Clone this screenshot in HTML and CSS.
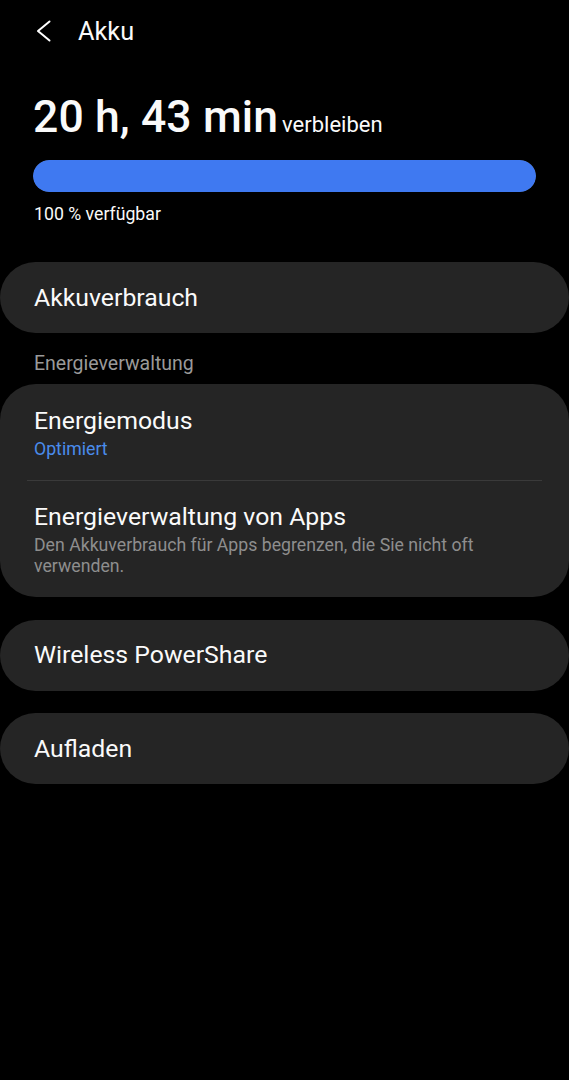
FILE: index.html
```html
<!DOCTYPE html>
<html lang="de">
<head>
  <meta charset="UTF-8">
  <meta name="viewport" content="width=device-width, initial-scale=1.0">
  <title>Akku</title>
  <link rel="stylesheet" href="styles.css">
</head>
<body>
  <header class="topbar">
    <svg class="back" width="24" height="24" viewBox="0 0 24 24">
      <polyline points="17.5,2.5 6,12 17.5,21.5" fill="none" stroke="#fff" stroke-width="2" stroke-linecap="round" stroke-linejoin="round"/>
    </svg>
    <h1>Akku</h1>
  </header>

  <section class="summary">
    <p class="remaining"><span class="time">20 h, 43 min</span> <span class="suffix">verbleiben</span></p>
    <div class="bar"><div class="fill" style="width: 100%"></div></div>
    <p class="level">100 % verfügbar</p>
  </section>

  <div class="card">
    <div class="item"><span class="title">Akkuverbrauch</span></div>
  </div>

  <h2 class="section">Energieverwaltung</h2>

  <div class="card">
    <div class="item">
      <span class="title">Energiemodus</span>
      <span class="value">Optimiert</span>
    </div>
    <hr class="divider">
    <div class="item">
      <span class="title">Energieverwaltung von Apps</span>
      <span class="desc">Den Akkuverbrauch für Apps begrenzen, die Sie nicht oft verwenden.</span>
    </div>
  </div>

  <div class="card">
    <div class="item"><span class="title">Wireless PowerShare</span></div>
  </div>

  <div class="card">
    <div class="item"><span class="title">Aufladen</span></div>
  </div>
</body>
</html>
```

FILE: styles.css
```css
body {
  margin: 0;
  background: #000;
  color: #fafafa;
  font-family: Roboto, "Noto Sans", sans-serif;
}
.topbar {
  display: flex;
  align-items: center;
  height: 62px;
  padding-left: 32px;
}
.back {
  width: 24px;
  height: 24px;
}
.topbar h1 {
  margin: 0 0 0 22px;
  font-size: 25.3px;
  font-weight: 400;
}
.summary {
  padding: 29px 33px 0 33px;
}
.remaining {
  margin: 0;
  line-height: 52px;
}
.time {
  font-size: 44.5px;
  font-weight: 500;
  letter-spacing: 0.1px;
}
.suffix {
  font-size: 22px;
}
.bar {
  margin-top: 7px;
  height: 32px;
  border-radius: 16px;
  background: #333;
  overflow: hidden;
}
.fill {
  height: 100%;
  background: #3f79f1;
  border-radius: 16px;
}
.level {
  margin: 11px 0 0 1px;
  font-size: 17.7px;
  line-height: 22px;
}
.card {
  background: #252525;
  border-radius: 36px;
  margin-top: 37px;
}
.section + .card {
  margin-top: 0;
}
.card + .card {
  margin-top: 22.5px;
}
.item {
  display: flex;
  flex-direction: column;
  justify-content: center;
  min-height: 71px;
  padding: 0 34px;
  box-sizing: border-box;
}
.title {
  font-size: 24.8px;
  line-height: 30px;
}
.value {
  font-size: 17.7px;
  line-height: 22px;
  color: #4a8cec;
  margin-top: 2px;
}
.desc {
  font-size: 17.7px;
  line-height: 21px;
  color: #8e8e8e;
  margin-top: 2.5px;
}
.card .item:first-child:not(:only-child) {
  padding-top: 22px;
  padding-bottom: 20px;
}
.card .item:last-child:not(:only-child) {
  padding-top: 21px;
  padding-bottom: 20.5px;
}
.divider {
  margin: 0 27px;
  border: none;
  border-top: 1px solid #3a3a3a;
}
.section {
  margin: 0;
  padding: 19px 34px 8px;
  font-size: 19.5px;
  line-height: 24px;
  font-weight: 400;
  color: #9a9a9a;
}
```
